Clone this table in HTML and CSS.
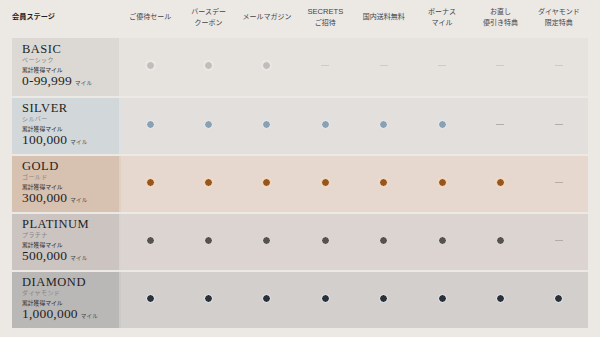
FILE: index.html
```html
<!DOCTYPE html>
<html lang="ja">
<head>
<meta charset="utf-8">
<link rel="stylesheet" href="styles.css">
</head>
<body>
<div class="table">
  <div class="head">
    <div class="hcell first"><span>会員ステージ</span></div>
    <div class="hcell"><span>ご優待セール</span></div>
    <div class="hcell"><span>バースデー<br>クーポン</span></div>
    <div class="hcell"><span>メールマガジン</span></div>
    <div class="hcell"><span><span class="lat">SECRETS</span><br>ご招待</span></div>
    <div class="hcell"><span>国内送料無料</span></div>
    <div class="hcell"><span>ボーナス<br>マイル</span></div>
    <div class="hcell"><span>お直し<br>優引き特典</span></div>
    <div class="hcell"><span>ダイヤモンド<br>限定特典</span></div>
  </div>

  <div class="row basic">
    <div class="label">
      <div class="name">BASIC</div>
      <div class="kana">ベーシック</div>
      <div class="cap">累計獲得マイル</div>
      <div class="miles">0-99,999<span class="unit">マイル</span></div>
    </div>
    <div class="cell"><span class="dot"></span></div>
    <div class="cell"><span class="dot"></span></div>
    <div class="cell"><span class="dot"></span></div>
    <div class="cell"><span class="dash"></span></div>
    <div class="cell"><span class="dash"></span></div>
    <div class="cell"><span class="dash"></span></div>
    <div class="cell"><span class="dash"></span></div>
    <div class="cell"><span class="dash"></span></div>
  </div>

  <div class="row silver">
    <div class="label">
      <div class="name">SILVER</div>
      <div class="kana">シルバー</div>
      <div class="cap">累計獲得マイル</div>
      <div class="miles">100,000<span class="unit">マイル</span></div>
    </div>
    <div class="cell"><span class="dot"></span></div>
    <div class="cell"><span class="dot"></span></div>
    <div class="cell"><span class="dot"></span></div>
    <div class="cell"><span class="dot"></span></div>
    <div class="cell"><span class="dot"></span></div>
    <div class="cell"><span class="dot"></span></div>
    <div class="cell"><span class="dash"></span></div>
    <div class="cell"><span class="dash"></span></div>
  </div>

  <div class="row gold">
    <div class="label">
      <div class="name">GOLD</div>
      <div class="kana">ゴールド</div>
      <div class="cap">累計獲得マイル</div>
      <div class="miles">300,000<span class="unit">マイル</span></div>
    </div>
    <div class="cell"><span class="dot"></span></div>
    <div class="cell"><span class="dot"></span></div>
    <div class="cell"><span class="dot"></span></div>
    <div class="cell"><span class="dot"></span></div>
    <div class="cell"><span class="dot"></span></div>
    <div class="cell"><span class="dot"></span></div>
    <div class="cell"><span class="dot"></span></div>
    <div class="cell"><span class="dash"></span></div>
  </div>

  <div class="row platinum">
    <div class="label">
      <div class="name">PLATINUM</div>
      <div class="kana">プラチナ</div>
      <div class="cap">累計獲得マイル</div>
      <div class="miles">500,000<span class="unit">マイル</span></div>
    </div>
    <div class="cell"><span class="dot"></span></div>
    <div class="cell"><span class="dot"></span></div>
    <div class="cell"><span class="dot"></span></div>
    <div class="cell"><span class="dot"></span></div>
    <div class="cell"><span class="dot"></span></div>
    <div class="cell"><span class="dot"></span></div>
    <div class="cell"><span class="dot"></span></div>
    <div class="cell"><span class="dash"></span></div>
  </div>

  <div class="row diamond">
    <div class="label">
      <div class="name">DIAMOND</div>
      <div class="kana">ダイヤモンド</div>
      <div class="cap">累計獲得マイル</div>
      <div class="miles">1,000,000<span class="unit">マイル</span></div>
    </div>
    <div class="cell"><span class="dot"></span></div>
    <div class="cell"><span class="dot"></span></div>
    <div class="cell"><span class="dot"></span></div>
    <div class="cell"><span class="dot"></span></div>
    <div class="cell"><span class="dot"></span></div>
    <div class="cell"><span class="dot"></span></div>
    <div class="cell"><span class="dot"></span></div>
    <div class="cell"><span class="dot"></span></div>
  </div>
</div>
</body>
</html>
```

FILE: styles.css
```css
html, body {
  margin: 0;
  padding: 0;
  background: #ece8e4;
}
body {
  width: 600px;
  height: 337px;
  overflow: hidden;
  font-family: "Noto Sans CJK JP", "Noto Sans", sans-serif;
  color: #333;
}
.table {
  padding: 0 12px;
  display: flex;
  flex-direction: column;
  gap: 2px;
}
.head, .row {
  display: grid;
  grid-template-columns: 109px repeat(8, 1fr);
}
.head {
  height: 36px;
}
.hcell {
  display: flex;
  align-items: center;
  justify-content: center;
  text-align: center;
  font-size: 7px;
  line-height: 11px;
  color: #444;
  padding-bottom: 3px;
}
.hcell.first {
  justify-content: flex-start;
  font-weight: bold;
  color: #222;
  font-size: 7.2px;
}
.lat {
  font-family: "Liberation Sans", Arial, sans-serif;
  font-size: 7.6px;
}
.row {
  height: 56px;
}
.label {
  padding: 4px 0 0 10px;
  border-right: 2px solid rgba(255,255,255,0.25);
}
.name {
  font-family: "Liberation Serif", "Times New Roman", serif;
  font-size: 12.5px;
  letter-spacing: 0.5px;
  line-height: 13px;
  color: #1f1f1f;
}
.kana {
  font-size: 6px;
  line-height: 8px;
  color: #8a8480;
  letter-spacing: 0.4px;
}
.cap {
  font-size: 5.8px;
  line-height: 8px;
  margin-top: 2px;
  color: #2a2a2a;
}
.miles {
  font-family: "Liberation Serif", "Times New Roman", serif;
  font-size: 13.5px;
  line-height: 13px;
  color: #1f1f1f;
  letter-spacing: 0.2px;
}
.unit {
  font-family: "Noto Sans CJK JP", sans-serif;
  font-size: 5.5px;
  margin-left: 3px;
  color: #444;
}
.cell {
  display: flex;
  align-items: center;
  justify-content: center;
  padding-bottom: 3px;
}
.dot {
  width: 7px;
  height: 7px;
  border-radius: 50%;
  border: 1px solid #fff;
  box-sizing: content-box;
}
.dash {
  width: 8px;
  height: 1px;
  background: #b3aca7;
}

.basic { background: #e6e2de; height: 58px; }
.basic .label { background: #dcd9d5; padding-top: 5px; }
.basic .dot { background: #c0bdba; border-color: #eeebe8; box-shadow: 0 0 2px rgba(255,255,255,0.8); }
.basic .dash { background: #cfcac6; }

.silver { background: #e3dfdd; }
.silver .label { background: #d2d7da; }
.silver .dot { background: #8aa1b4; border-color: #f5f3f2; }

.gold { background: #e6d8ce; }
.gold .label { background: #d7c1b0; }
.gold .dot { background: #98561f; border-color: #fbe8d6; box-shadow: 0 0 2px rgba(255,235,215,0.9); }

.platinum { background: #dbd4d1; }
.platinum .label { background: #cbc4c1; }
.platinum .dot { background: #57524f; border-color: #f6f2f0; }

.diamond { background: #d3cfcd; }
.diamond .label { background: #bab8b6; }
.diamond .dot { background: #2b313a; border-color: #ffffff; }
```
